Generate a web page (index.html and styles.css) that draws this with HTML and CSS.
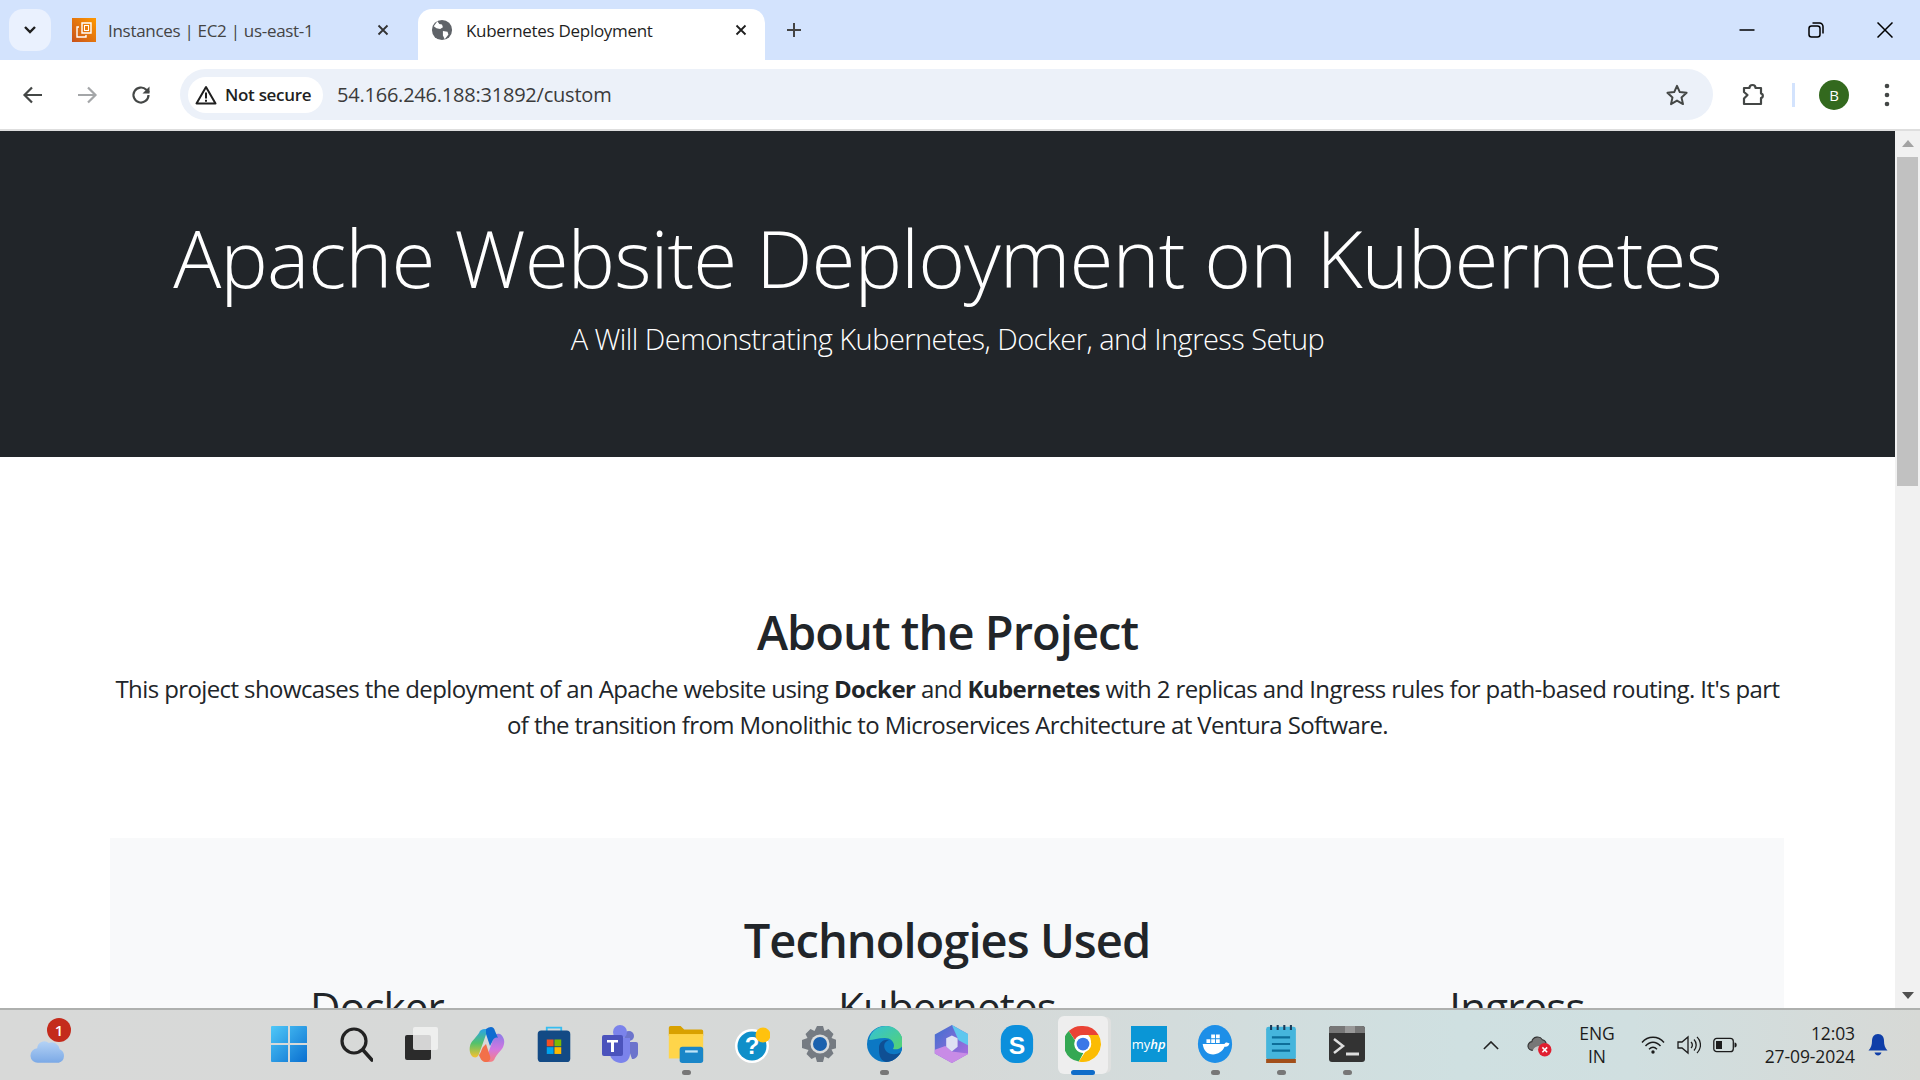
FILE: index.html
```html
<!DOCTYPE html>
<html lang="en">
<head>
<meta charset="utf-8">
<title>Kubernetes Deployment</title>
<link rel="stylesheet" href="styles.css">
</head>
<body>
<div class="browser">
  <header class="tabstrip">
    <button class="tabsearch"><svg width="14" height="10" viewBox="0 0 14 10"><path d="M2 2l5 5 5-5" fill="none" stroke="#1f1f1f" stroke-width="2.4"/></svg></button>
    <div class="tab inactive">
      <svg class="favicon" viewBox="0 0 24 24"><defs><linearGradient id="aws" x1="0" y1="1" x2="1" y2="0"><stop offset="0" stop-color="#c8511b"/><stop offset="1" stop-color="#f90"/></linearGradient></defs><rect width="24" height="24" fill="url(#aws)"/><path d="M10 5h9v10h-9zM7 9H5v10h9v-2" fill="none" stroke="#fff" stroke-width="1.4"/><rect x="12.500" y="7.500" width="4" height="5" fill="none" stroke="#fff"/></svg>
      <span class="tabtitle">Instances | EC2 | us-east-1</span>
      <svg class="tabclose" viewBox="0 0 12 12"><path d="M1.500 1.500l9 9M10.500 1.500l-9 9" stroke="#333" stroke-width="1.800"/></svg>
    </div>
    <div class="tab active">
      <svg class="favicon globe" viewBox="0 0 24 24"><circle cx="12" cy="12" r="11" fill="#5f6368"/><path d="M7 2.500l2 3 3 .5 1 3-3 2-4-1-3-2zM13 13l5 1 1 3-4 5-2-4z" fill="#fff"/></svg>
      <span class="tabtitle">Kubernetes Deployment</span>
      <svg class="tabclose" viewBox="0 0 12 12"><path d="M1.500 1.500l9 9M10.500 1.500l-9 9" stroke="#1f1f1f" stroke-width="1.800"/></svg>
    </div>
    <svg class="newtab" viewBox="0 0 16 16"><path d="M8 1v14M1 8h14" stroke="#444" stroke-width="2"/></svg>
    <div class="winctrls">
      <svg viewBox="0 0 16 16"><path d="M.5 8h15" stroke="#000" stroke-width="1.500"/></svg>
      <svg viewBox="0 0 16 16"><rect x="1" y="4" width="11" height="11" rx="2.500" fill="none" stroke="#000" stroke-width="1.500"/><path d="M4.500 1h7a3.500 3.500 0 0 1 3.500 3.500v7" fill="none" stroke="#000" stroke-width="1.500"/></svg>
      <svg viewBox="0 0 16 16"><path d="M.5.5l15 15M15.500.5l-15 15" stroke="#000" stroke-width="1.500"/></svg>
    </div>
  </header>

  <nav class="toolbar">
    <svg class="navicon first" viewBox="0 0 24 24"><path d="M21 12H4M11 4.500L3.500 12l7.500 7.500" fill="none" stroke="#444746" stroke-width="2.200"/></svg>
    <svg class="navicon" viewBox="0 0 24 24"><path d="M3 12h17M13 4.500l7.500 7.500-7.500 7.500" fill="none" stroke="#a4a6a8" stroke-width="2.200"/></svg>
    <svg class="navicon" viewBox="0 0 24 24"><path d="M19.500 12a7.500 7.500 0 1 1-2.200-5.300L20 9.500" fill="none" stroke="#444746" stroke-width="2.200"/><path d="M20.500 3.500v7h-7z" fill="#444746"/></svg>
    <div class="omnibox">
      <div class="chip">
        <svg class="warn" viewBox="0 0 22 20"><path d="M11 2L1.500 18.500h19z" fill="none" stroke="#1f1f1f" stroke-width="2" stroke-linejoin="round"/><path d="M11 7.500v6M11 14.800v2" stroke="#1f1f1f" stroke-width="2"/></svg>
        <span>Not secure</span>
      </div>
      <span class="url">54.166.246.188:31892/custom</span>
      <svg class="star" viewBox="0 0 24 24"><path d="M12 2.800l2.800 6.300 6.800.7-5.100 4.600 1.500 6.700-6-3.500-6 3.500 1.500-6.700L2.400 9.800l6.800-.7z" fill="none" stroke="#444746" stroke-width="2" stroke-linejoin="round"/></svg>
    </div>
    <svg class="ext" viewBox="0 0 24 24"><path d="M3 5h5.500a3 3 0 0 1 6 0H20v5.500a2.300 2.300 0 0 1 0 4.500V21H3v-5.500l3.500-3.500L3 9z" fill="none" stroke="#444746" stroke-width="2.200" stroke-linejoin="round"/></svg>
    <span class="sep"></span>
    <span class="avatar">B</span>
    <svg class="dots" viewBox="0 0 6 24"><circle cx="3" cy="3" r="2.300" fill="#444746"/><circle cx="3" cy="12" r="2.300" fill="#444746"/><circle cx="3" cy="21" r="2.300" fill="#444746"/></svg>
  </nav>

  <div class="viewport">
    <main class="page">
      <section class="hero">
        <h1>Apache Website Deployment on Kubernetes</h1>
        <p class="lead">A Will Demonstrating Kubernetes, Docker, and Ingress Setup</p>
      </section>
      <section class="about">
        <h2>About the Project</h2>
        <p>This project showcases the deployment of an Apache website using <strong>Docker</strong> and <strong>Kubernetes</strong> with 2 replicas and Ingress rules for path-based routing. It's part of the transition from Monolithic to Microservices Architecture at Ventura Software.</p>
      </section>
      <section class="tech">
        <h2>Technologies Used</h2>
        <div class="techrow">
          <h3>Docker</h3>
          <h3>Kubernetes</h3>
          <h3>Ingress</h3>
        </div>
      </section>
    </main>
    <aside class="scrollbar">
      <span class="arrow up"></span>
      <span class="thumb"></span>
      <span class="arrow down"></span>
    </aside>
  </div>

  <footer class="taskbar">
    <div class="weather">
      <svg viewBox="0 0 40 28" class="cloud"><defs><linearGradient id="cl" x1="0" y1="0" x2="0" y2="1"><stop offset="0" stop-color="#b4d2f5"/><stop offset="1" stop-color="#7ba9e6"/></linearGradient></defs><path d="M9 27a8 8 0 0 1-1-16 8 8 0 0 1 13-6 9 9 0 0 1 12 7 8 8 0 0 1-1 15z" fill="url(#cl)"/></svg>
      <span class="badge">1</span>
    </div>
    <div class="apps">
      <span class="app"><svg viewBox="0 0 36 36"><defs><linearGradient id="win" x1="0" y1="0" x2="1" y2="1"><stop offset="0" stop-color="#4fc8f8"/><stop offset="1" stop-color="#0a6fd0"/></linearGradient></defs><path fill="url(#win)" d="M0 1a1 1 0 0 1 1-1h16v17H0zM19 0h16a1 1 0 0 1 1 1v16H19zM0 19h17v17H1a1 1 0 0 1-1-1zM19 19h17v16a1 1 0 0 1-1 1H19z"/></svg></span>
      <span class="app"><svg viewBox="-2 0 36 36"><circle cx="15" cy="15" r="12" fill="none" stroke="#222" stroke-width="3.200"/><path d="M24 24l9 10" stroke="#222" stroke-width="3.600" stroke-linecap="round"/></svg></span>
      <span class="app"><svg viewBox="0 0 36 36"><rect x="2" y="9" width="26" height="25" rx="2" fill="#2b2b2b"/><rect x="10" y="1" width="25" height="23" rx="2" fill="#f2f2f2" fill-opacity=".85"/></svg></span>
      <span class="app"><svg viewBox="0 0 36 36"><defs><linearGradient id="cp1" x1="0" y1="0" x2="0" y2="1"><stop offset="0" stop-color="#2aa3e8"/><stop offset=".5" stop-color="#54c26a"/><stop offset="1" stop-color="#f6c12f"/></linearGradient><linearGradient id="cp2" x1="0" y1="0" x2="0" y2="1"><stop offset="0" stop-color="#8a7be8"/><stop offset=".55" stop-color="#d277e0"/><stop offset="1" stop-color="#f77f7f"/></linearGradient></defs><path d="M10 7c1-3 3-4 6-4h3L10 28c-1 3-3 4-6 3-3-2-4-7-3-11 1-5 5-7 9-13z" fill="url(#cp1)"/><path d="M26 32c-1 3-3 4-6 4h-4l9-25c1-3 3-4 6-3 3 2 5 6 4 10-1 6-6 8-9 14z" fill="url(#cp2)"/><path d="M17 3c4-3 8-3 9 2l3 7c-2-1-4 0-5 2l-3 6-4-12z" fill="#0f6cd0"/><path d="M10 29c2-2 2-5 4-8l3-3 4 12c1 4-1 6-5 6-3 0-5-4-6-7z" fill="#f2704a"/></svg></span>
      <span class="app"><svg viewBox="0 0 36 42"><path d="M10 8V3h16v5" fill="none" stroke="#36bdf0" stroke-width="2"/><rect y="6" width="36" height="35" rx="4" fill="#134a85"/><path d="M10 16h7.500v7.500H10z" fill="#f25022"/><path d="M18.500 16H26v7.500h-7.500z" fill="#7fba00"/><path d="M10 24.500h7.500V32H10z" fill="#00a4ef"/><path d="M18.500 24.500H26V32h-7.500z" fill="#ffb900"/></svg></span>
      <span class="app"><svg viewBox="0 0 36 38"><circle cx="27" cy="11" r="5" fill="#6c74cc"/><path d="M24 17h10a2 2 0 0 1 2 2v9c0 4-3 6-6 6z" fill="#6c74cc"/><circle cx="18" cy="7" r="7" fill="#7b83eb"/><path d="M8 13h20v16c0 5-4 9-9 9s-11-4-11-9z" fill="#7b83eb"/><rect y="10" width="21" height="21" rx="2" fill="#4b53bc"/><path d="M5 15h11v2.500h-4V27H9v-9.500H5z" fill="#fff"/></svg></span>
      <span class="app run"><svg viewBox="0 0 38 42"><path d="M0 3a2 2 0 0 1 2-2h11l4 4h19a2 2 0 0 1 2 2v5H0z" fill="#d9a100"/><rect y="10" width="38" height="27" fill="#ffd54a"/><rect x="12" y="24" width="26" height="18" rx="3" fill="#1a86c8"/><rect x="18" y="28" width="14" height="2.500" fill="#bfe4f8"/></svg></span>
      <span class="app"><svg viewBox="-2 0 36 38"><circle cx="16" cy="21" r="17" fill="#fff"/><circle cx="16" cy="21" r="14.500" fill="#0f8fc9"/><text x="16" y="29" class="helpq">?</text><circle cx="27" cy="10" r="7.500" fill="#ffc20e"/></svg></span>
      <span class="app"><svg viewBox="-2 0 36 36"><path d="M15 0h6l1.500 5 4-2 5 5-2 4 5 2v8l-5 1.500 2 4-5 5-4-2L21 36h-6l-1.500-5-4 2-5-5 2-4L0 22v-8l5.500-2-2-4 5-5 4 2z" fill="#757b82"/><circle cx="18" cy="18" r="9.500" fill="#dadcdc"/><circle cx="18" cy="18" r="7" fill="#1c62ae"/></svg></span>
      <span class="app run"><svg viewBox="-1 0 36 36"><defs><linearGradient id="ed1" x1="0" y1="0" x2="1" y2="1"><stop offset="0" stop-color="#33c0d8"/><stop offset="1" stop-color="#56d46f"/></linearGradient></defs><circle cx="18" cy="18" r="18" fill="#0c78c4"/><path d="M2 14C4 4 12 0 19 0c10 0 17 8 17 17 0 6-7 7-10 6 3-5-1-11-8-11-7 0-12 2-16 2z" fill="url(#ed1)"/><path d="M12 22c0-6 5-9 10-8-6 2-6 8-2 12 4 3 10 3 14 0-3 6-9 10-15 10-7-2-7-9-7-14z" fill="#0f4f94"/></svg></span>
      <span class="app"><svg viewBox="-2 0 36 40"><defs><linearGradient id="m1" x1="0" y1="0" x2="1" y2="1"><stop offset="0" stop-color="#3d6fcf"/><stop offset="1" stop-color="#b56ce0"/></linearGradient></defs><path d="M18 0l18 10v20L18 40 0 30V10z" fill="url(#m1)"/><path d="M18 0l18 10v12l-11-6z" fill="#5fc7ee"/><path d="M0 26l11-4 7 6 18 2-18 10L0 30z" fill="#c88be6"/><path d="M12 14l6-3 6 3v9l-6 5-6-5z" fill="#dfe1f3"/></svg></span>
      <span class="app"><svg viewBox="-2 0 36 40"><rect x="0" y="0" width="34" height="40" rx="15" fill="#0b8fdc"/><text x="17" y="30" class="skype">S</text></svg></span>
      <span class="app active-app"><span class="appbg"></span><svg viewBox="0 0 48 48"><circle cx="24" cy="24" r="24" fill="#fff"/><path d="M24 0a24 24 0 0 1 20.800 12H24a12 12 0 0 0-10.800 6.800L5 6.800A24 24 0 0 1 24 0z" fill="#ea4335"/><path d="M5 6.800l8.400 12.400a12 12 0 0 0 11.100 16.800L18.400 47.300A24 24 0 0 1 5 6.800z" fill="#34a853"/><path d="M44.800 12A24 24 0 0 1 18.400 47.300L30 30a12 12 0 0 0 1-18z" fill="#fbbc04"/><circle cx="24" cy="24" r="11" fill="#fff"/><circle cx="24" cy="24" r="8.500" fill="#3b78e7"/></svg></span>
      <span class="app"><span class="myhp">my<i>hp</i></span></span>
      <span class="app run"><svg viewBox="0 0 36 40"><ellipse cx="18" cy="20" rx="18" ry="20" fill="#1d8fe8"/><path d="M5 20h23c1-2 3-2 4-1 1 0 2 1 1 1-1 3-4 3-5 3-2 5-7 8-12 8-6 0-10-4-11-11z" fill="#fff"/><path d="M9 15h4v4H9zM14 15h4v4h-4zM19 15h4v4h-4zM14 10h4v4h-4zM19 10h4v4h-4z" fill="#fff"/></svg></span>
      <span class="app run"><svg viewBox="0 0 36 46"><rect y="2" width="36" height="40" rx="3" fill="#45b5dc"/><rect y="41" width="36" height="5" fill="#a24f1a"/><path d="M6 0v6M14 0v6M22 0v6M30 0v6" stroke="#1b3a57" stroke-width="2.500"/><path d="M7 15h22M7 23h22M7 31h22" stroke="#0d6e99" stroke-width="2.500"/></svg></span>
      <span class="app run"><svg viewBox="0 0 36 36"><rect y="0" width="36" height="36" rx="3" fill="#333"/><path d="M0 3a3 3 0 0 1 3-3h13v7H0z" fill="#777"/><path d="M16 0h10v7H16z" fill="#999"/><path d="M26 0h7a3 3 0 0 1 3 3v4H26z" fill="#777"/><path d="M5 13l9 7-9 7" fill="none" stroke="#ddd" stroke-width="2.500"/><path d="M17 28h13" stroke="#ddd" stroke-width="3"/></svg></span>
    </div>
    <div class="tray">
      <svg class="t-chev" viewBox="0 0 18 10"><path d="M1 9l8-8 8 8" fill="none" stroke="#222" stroke-width="1.800"/></svg>
      <svg class="t-cloud" viewBox="0 0 26 24"><path d="M6 17a4.500 4.500 0 0 1-1-9 6 6 0 0 1 11-2 5 5 0 0 1 4 4" fill="#777" stroke="#333" stroke-width="1.200"/><path d="M6 17c2-4 6-5 10-4v4z" fill="#ccc"/><circle cx="18.500" cy="16.500" r="7" fill="#e01e30"/><path d="M16 14l5 5M21 14l-5 5" stroke="#fff" stroke-width="1.600"/></svg>
      <div class="lang"><span>ENG</span><span>IN</span></div>
      <svg class="t-wifi" viewBox="0 0 24 18"><path d="M1 6.500C7-.5 17-.5 23 6.500M4.500 10c4.500-5 10.500-5 15 0M8 13.300c2.500-2.500 5.500-2.500 8 0" fill="none" stroke="#1c1c1c" stroke-width="1.400"/><circle cx="12" cy="16" r="1.700" fill="#1c1c1c"/></svg>
      <svg class="t-vol" viewBox="0 0 24 20"><path d="M1 7h4l6-5v16l-6-5H1z" fill="none" stroke="#1c1c1c" stroke-width="1.300"/><path d="M14 7a4 4 0 0 1 0 6M17 4.500a8 8 0 0 1 0 11M20 2a11 11 0 0 1 0 16" fill="none" stroke="#1c1c1c" stroke-width="1.300"/></svg>
      <svg class="t-bat" viewBox="0 0 24 16"><rect x=".8" y="1.300" width="19.500" height="13.400" rx="3" fill="none" stroke="#1c1c1c" stroke-width="1.300"/><rect x="3" y="4" width="6" height="8" fill="#1c1c1c"/><path d="M21.500 5.500c1.500 0 2.200 1 2.200 2.500s-.7 2.500-2.200 2.500z" fill="#1c1c1c"/></svg>
      <div class="clock"><span>12:03</span><span>27-09-2024</span></div>
      <svg class="t-bell" viewBox="0 0 20 24"><path d="M10 1c4 0 6 3 6 7 0 4 1 7 3.500 9.500H.5C3 15 4 12 4 8c0-4 2-7 6-7z" fill="#0f3ea8"/><path d="M6.500 19.500h7c-.6 2-2 3-3.500 3s-2.900-1-3.500-3z" fill="#0f3ea8"/></svg>
    </div>
  </footer>
</div>
</body>
</html>
```
FILE: styles.css
```css
* { box-sizing: border-box; }
html, body { margin: 0; height: 100%; overflow: hidden; }
body { font-family: "Open Sans", "Liberation Sans", sans-serif; color: #212529; }
svg { display: block; flex: none; }
.browser { display: flex; flex-direction: column; width: 1920px; height: 1080px; overflow: hidden; }

/* tab strip */
.tabstrip { height: 60px; flex: none; display: flex; align-items: flex-end; background: #d3e3fd; padding-left: 9px; position: relative; }
.tabsearch { width: 42px; height: 42px; margin-bottom: 9px; border: 0; border-radius: 14px; background: #eaf1fe; display: flex; align-items: center; justify-content: center; padding: 0; }
.tab { height: 51px; display: flex; align-items: center; font-size: 17px; padding-bottom: 9px; }
.tab.inactive { width: 367px; padding-left: 21px; color: #444; }
.tab.active { width: 347px; padding-left: 13px; background: #fff; border-radius: 14px 14px 0 0; color: #1f1f1f; }
.favicon { width: 24px; height: 24px; }
.globe { width: 22px; height: 22px; }
.tabtitle { margin-left: 12px; flex: 1; letter-spacing: -.3px; white-space: nowrap; }
.tab.active .tabtitle { margin-left: 13px; }
.tabclose { width: 12px; height: 12px; margin-right: 18px; }
.inactive .tabclose { margin-right: 29px; }
.newtab { width: 16px; height: 16px; margin: 0 0 22px 21px; }
.winctrls { margin-left: auto; display: flex; align-self: flex-start; padding: 22px 27px 0 0; gap: 53px; }
.winctrls svg { width: 16px; height: 16px; }

/* toolbar */
.toolbar { height: 71px; flex: none; display: flex; align-items: center; background: #fff; border-radius: 15px 15px 0 0; border-bottom: 2px solid #dedede; }
.navicon { width: 24px; height: 24px; margin-left: 30px; }
.navicon.first { margin-left: 21px; }
.omnibox { width: 1533px; height: 51px; margin-left: 27px; border-radius: 26px; background: #ecf1f9; display: flex; align-items: center; padding-left: 8px; }
.chip { height: 36px; width: 135px; border-radius: 18px; background: #fff; display: flex; align-items: center; padding-left: 7px; font-size: 17px; font-weight: 600; color: #1f1f1f; letter-spacing: -.3px; white-space: nowrap; }
.warn { width: 22px; height: 20px; margin-right: 8px; }
.url { margin-left: 14px; font-size: 20px; letter-spacing: -.22px; color: #3b3b3b; }
.star { width: 24px; height: 24px; margin-left: auto; margin-right: 24px; }
.ext { width: 24px; height: 24px; margin-left: 28px; }
.sep { width: 3px; height: 24px; background: #d3e3fd; margin-left: 27px; }
.avatar { width: 30px; height: 30px; margin-left: 24px; border-radius: 50%; background: #33691e; color: #fff; font: 15px/30px "Open Sans", sans-serif; text-align: center; }
.dots { width: 6px; height: 24px; margin-left: 35px; }

/* page */
.viewport { flex: 1; min-height: 0; display: flex; overflow: hidden; background: #fff; }
.page { flex: 1; min-width: 0; overflow: hidden; }
.hero { background: #212529; color: #fff; text-align: center; padding: 78px 0 100px; }
.hero h1 { margin: 0; font-size: 80px; line-height: 96px; font-weight: 300; letter-spacing: -1px; white-space: nowrap; }
.lead { margin: 16px 0 0; font-size: 29px; line-height: 36px; font-weight: 300; letter-spacing: -.54px; }
.about { text-align: center; padding: 146px 110px 95px; }
h2 { margin: 0; font-size: 47px; line-height: 58px; font-weight: 600; letter-spacing: -.95px; }
.about p { margin: 10px 0 0; font-size: 24px; line-height: 36px; letter-spacing: -.6px; }
.about strong { font-weight: 700; }
.tech { margin: 0 111px 0 110px; background: #f8f9fa; padding-top: 73px; text-align: center; height: 400px; }
.techrow { display: grid; grid-template-columns: repeat(3, 1fr); margin: 14px -18px 0; }
h3 { margin: 0; font-size: 42px; line-height: 48px; font-weight: 500; letter-spacing: -.8px; }

.scrollbar { width: 25px; flex: none; background: #f1f1f1; display: flex; flex-direction: column; align-items: center; }
.thumb { width: 21px; height: 329px; background: #c1c1c1; margin-top: 10px; }
.arrow { width: 0; height: 0; border-left: 6px solid transparent; border-right: 6px solid transparent; }
.arrow.up { border-bottom: 7px solid #a3a3a3; margin-top: 9px; }
.arrow.down { border-top: 7px solid #505050; margin-top: auto; margin-bottom: 9px; }

/* taskbar */
.taskbar { height: 72px; flex: none; display: flex; align-items: center; border-top: 2px solid #aeb0ae; background: linear-gradient(90deg, #d8d9d8 0%, #d6d9d8 50%, #cfe0e1 76%, #d0dfe0 85%, #d7d9d6 100%); }
.weather { width: 256px; flex: none; position: relative; height: 70px; }
.cloud { position: absolute; left: 30px; top: 27px; width: 36px; height: 28px; }
.badge { position: absolute; left: 47px; top: 8px; width: 24px; height: 24px; border-radius: 50%; background: #c42b1c; color: #fff; font-size: 15px; line-height: 24px; text-align: center; font-weight: 600; }
.apps { display: flex; width: 1124px; flex: none; }
.app { width: 66.125px; height: 70px; display: flex; align-items: center; justify-content: center; position: relative; padding-bottom: 2px; }
.app svg { width: 36px; height: 38px; position: relative; }
.app.run::after { content: ""; position: absolute; left: 29px; bottom: 5px; width: 9px; height: 5px; border-radius: 3px; background: #777; }
.active-app .appbg { position: absolute; left: 8px; top: 6px; width: 50px; height: 58px; border-radius: 6px; background: #eeeeee; box-shadow: 4px 0 0 -1px #dfe0df; }
.active-app::after { content: ""; position: absolute; left: 21px; bottom: 5px; width: 24px; height: 5px; border-radius: 3px; background: #0f6cc9; }
.helpq { font: 700 24px "Liberation Sans", sans-serif; fill: #fff; text-anchor: middle; }
.skype { font: 700 26px "Liberation Sans", sans-serif; fill: #fff; text-anchor: middle; }
.myhp { width: 36px; height: 36px; background: #0a96d6; color: #fff; font-size: 13px; line-height: 36px; text-align: center; position: relative; }
.myhp i { font-weight: 600; }

.tray { flex: 1; display: flex; align-items: center; color: #1c1c1c; font-size: 17.500px; }
.t-chev { width: 16px; height: 9px; margin-left: 103px; }
.t-cloud { width: 25px; height: 23px; margin-left: 28px; }
.lang { width: 60px; margin-left: 15px; display: flex; flex-direction: column; align-items: center; line-height: 23px; }
.t-wifi { width: 24px; height: 18px; margin-left: 14px; }
.t-vol { width: 24px; height: 20px; margin-left: 12px; }
.t-bat { width: 24px; height: 16px; margin-left: 12px; }
.clock { width: 118px; display: flex; flex-direction: column; align-items: flex-end; line-height: 23px; letter-spacing: -.1px; }
.t-bell { width: 20px; height: 24px; margin-left: 13px; }
```
